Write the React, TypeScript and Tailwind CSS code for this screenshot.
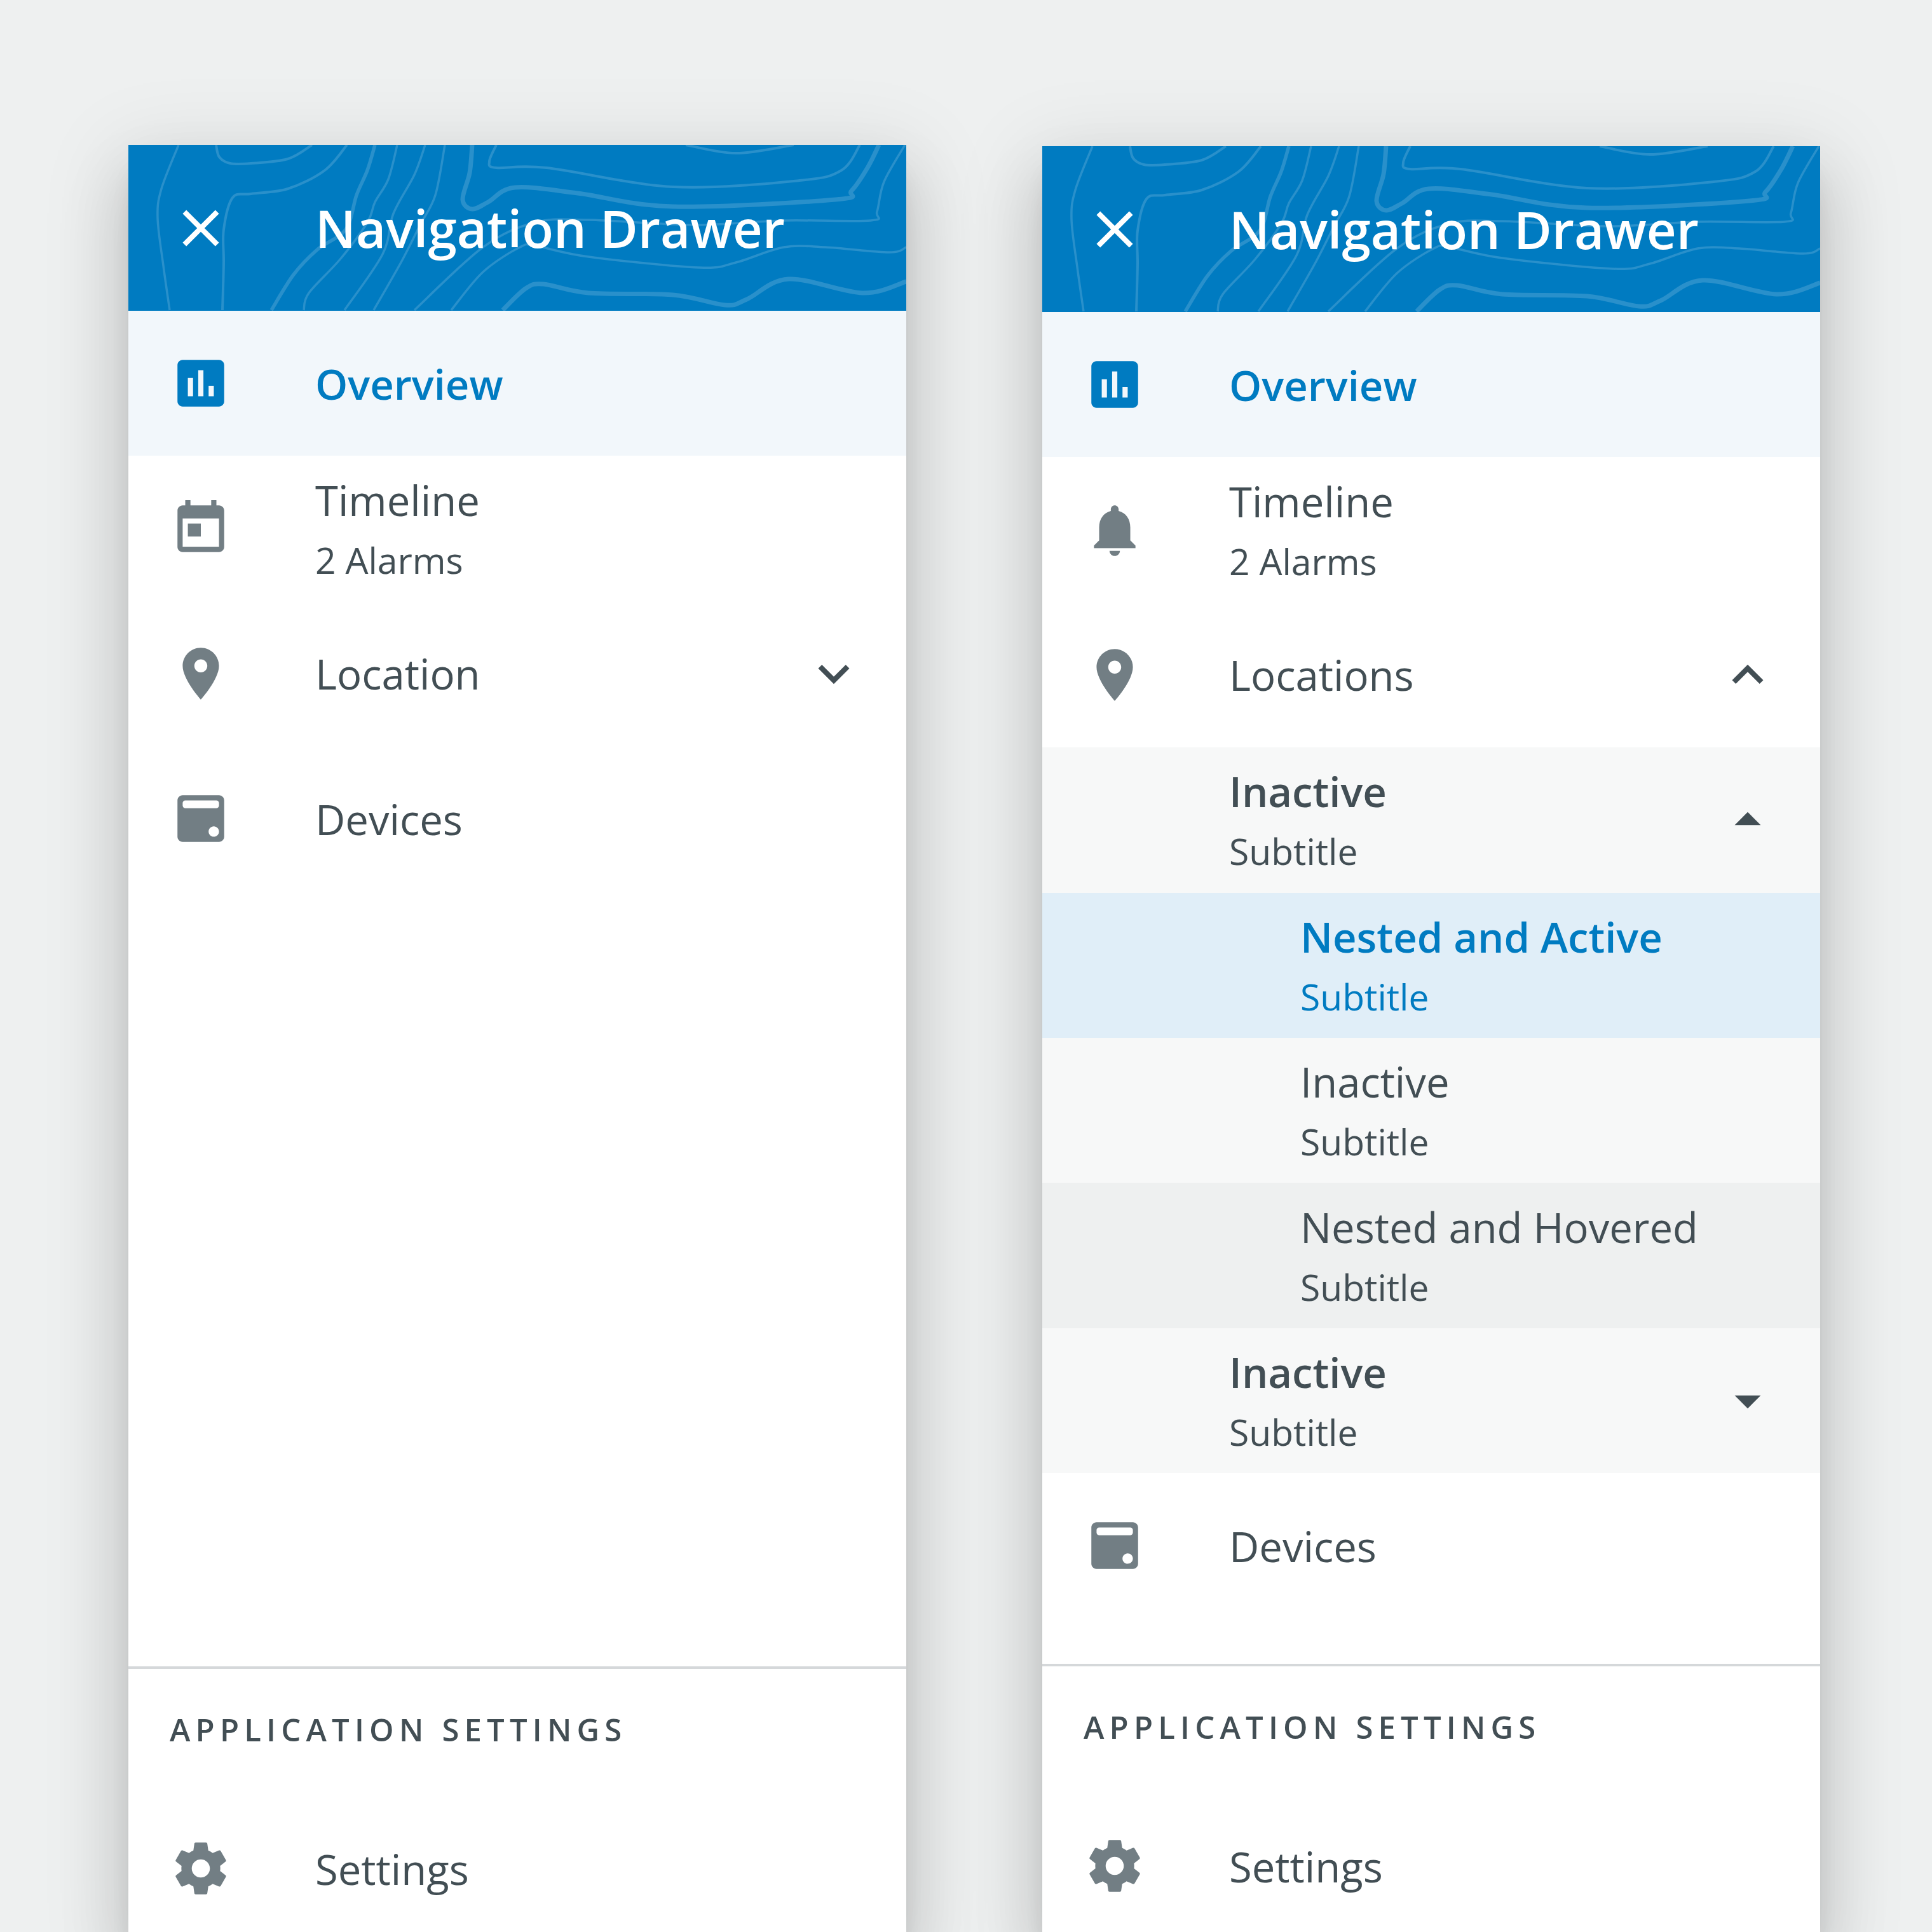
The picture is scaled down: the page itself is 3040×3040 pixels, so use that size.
import React from 'react';

const ICONS = {
  close: 'M19 6.41L17.59 5 12 10.59 6.41 5 5 6.41 10.59 12 5 17.59 6.41 19 12 13.41 17.59 19 19 17.59 13.41 12z',
  overview:
    'M19 3H5c-1.1 0-2 .9-2 2v14c0 1.1.9 2 2 2h14c1.1 0 2-.9 2-2V5c0-1.1-.9-2-2-2zM9 17H7v-7h2v7zm4 0h-2V7h2v10zm4 0h-2v-4h2v4z',
  today:
    'M19 3h-1V1h-2v2H8V1H6v2H5c-1.11 0-1.99.9-1.99 2L3 19c0 1.1.89 2 2 2h14c1.1 0 2-.9 2-2V5c0-1.1-.9-2-2-2zm0 16H5V8h14v11zM7 10h5v5H7z',
  bell: 'M12 22c1.1 0 2-.9 2-2h-4c0 1.1.9 2 2 2zm6-6v-5c0-3.07-1.63-5.64-4.5-6.32V4c0-.83-.67-1.5-1.5-1.5s-1.5.67-1.5 1.5v.68C7.64 5.36 6 7.92 6 11v5l-2 2v1h16v-1l-2-2z',
  place:
    'M12 2C8.13 2 5 5.13 5 9c0 5.25 7 13 7 13s7-7.75 7-13c0-3.87-3.13-7-7-7zm0 9.5c-1.38 0-2.5-1.12-2.5-2.5s1.12-2.5 2.5-2.5 2.5 1.12 2.5 2.5-1.12 2.5-2.5 2.5z',
  device:
    'M5 3h14c1.1 0 2 .9 2 2v14c0 1.1-.9 2-2 2H5c-1.1 0-2-.9-2-2V5c0-1.1.9-2 2-2zm1 2c-.55 0-1 .45-1 1v1c0 .55.45 1 1 1h12c.55 0 1-.45 1-1V6c0-.55-.45-1-1-1H6zm11 10c-1.1 0-2 .9-2 2s.9 2 2 2 2-.9 2-2-.9-2-2-2z',
  gear: 'M19.43 12.98c.04-.32.07-.64.07-.98s-.03-.66-.07-.98l2.11-1.65c.19-.15.24-.42.12-.64l-2-3.46c-.12-.22-.39-.3-.61-.22l-2.49 1c-.52-.4-1.08-.73-1.69-.98l-.38-2.65C14.46 2.18 14.25 2 14 2h-4c-.25 0-.46.18-.49.42l-.38 2.65c-.61.25-1.17.59-1.69.98l-2.49-1c-.23-.09-.49 0-.61.22l-2 3.46c-.13.22-.07.49.12.64l2.11 1.65c-.04.32-.07.65-.07.98s.03.66.07.98l-2.11 1.65c-.19.15-.24.42-.12.64l2 3.46c.12.22.39.3.61.22l2.49-1c.52.4 1.08.73 1.69.98l.38 2.65c.03.24.24.42.49.42h4c.25 0 .46-.18.49-.42l.38-2.65c.61-.25 1.17-.59 1.69-.98l2.49 1c.23.09.49 0 .61-.22l2-3.46c.12-.22.07-.49-.12-.64l-2.11-1.65zM12 15.5c-1.93 0-3.5-1.57-3.5-3.5s1.57-3.5 3.5-3.5 3.5 1.57 3.5 3.5-1.57 3.5-3.5 3.5z',
  chevronDown: 'M16.59 8.59L12 13.17 7.41 8.59 6 10l6 6 6-6z',
  chevronUp: 'M12 8l-6 6 1.41 1.41L12 10.83l4.59 4.58L18 14z',
  arrowUp: 'M7 14l5-5 5 5z',
  arrowDown: 'M7 10l5 5 5-5z',
};

type IconName = keyof typeof ICONS;

const Icon = ({ name, className }: { name: IconName; className: string }) => (
  <svg viewBox="0 0 24 24" fill="currentColor" fillRule="evenodd" className={`w-[98px] h-[98px] shrink-0 ${className}`}>
    <path d={ICONS[name]} />
  </svg>
);

// contour lines of the header, as points in header pixels
const CONTOURS: { width: number; points: number[][] }[] = [
  { width: 3.5, points: [[79, 0], [52, 69], [46, 115], [55, 190], [65, 260]] },
  { width: 4, points: [[138, 0], [143, 19], [160, 29], [193, 29], [251, 22], [289, 0]] },
  { width: 4, points: [[344, 0], [309, 40], [251, 69], [193, 77], [164, 83], [150, 133], [150, 186], [148, 260]] },
  { width: 5.5, points: [[388, 0], [376, 40], [359, 79], [342, 133], [297, 165], [260, 204], [225, 260]] },
  { width: 3.5, points: [[423, 0], [409, 54], [388, 90], [376, 122], [334, 179], [284, 233], [276, 260]] },
  { width: 3.5, points: [[467, 0], [450, 47], [417, 108], [400, 172], [340, 260]] },
  { width: 3.5, points: [[498, 0], [483, 79], [459, 126], [430, 183], [386, 260]] },
  { width: 3.5, points: [[1222, 0], [1189, 58], [1178, 105], [1168, 119], [1031, 119], [890, 126], [724, 118], [640, 122], [558, 161], [450, 260]] },
  { width: 7, points: [[541, 0], [537, 44], [526, 86], [541, 101], [566, 90], [608, 67], [707, 76], [857, 97], [1113, 86], [1138, 72], [1163, 36], [1181, 0]] },
  { width: 4, points: [[579, 0], [568, 26], [579, 36], [658, 36], [857, 66], [1056, 56], [1122, 40], [1151, 0]] },
  { width: 4, points: [[877, 0], [956, 13], [1047, 0]] },
  { width: 3.5, points: [[508, 260], [558, 200], [616, 161], [641, 159], [724, 176], [898, 193], [956, 185], [1031, 161], [1097, 161], [1197, 169], [1224, 161]] },
  { width: 7, points: [[589, 260], [625, 226], [653, 219], [724, 233], [857, 236], [939, 252], [973, 243], [1039, 211], [1155, 233], [1224, 215]] },
];

const smoothPath = (pts: number[][]) => {
  let d = `M${pts[0][0]} ${pts[0][1]}`;
  for (let i = 0; i < pts.length - 1; i++) {
    const p0 = pts[i - 1] || pts[i];
    const p1 = pts[i];
    const p2 = pts[i + 1];
    const p3 = pts[i + 2] || p2;
    const c1x = p1[0] + (p2[0] - p0[0]) / 6;
    const c1y = p1[1] + (p2[1] - p0[1]) / 6;
    const c2x = p2[0] - (p3[0] - p1[0]) / 6;
    const c2y = p2[1] - (p3[1] - p1[1]) / 6;
    d += ` C${c1x} ${c1y} ${c2x} ${c2y} ${p2[0]} ${p2[1]}`;
  }
  return d;
};

const Header = () => (
  <div className="relative h-[261px] shrink-0 bg-[#007bc1] flex items-center gap-[131px] px-[65px] text-white overflow-hidden">
    <svg viewBox="0 0 1224 261" fill="none" className="absolute inset-0 w-full h-full">
      {CONTOURS.map((line, i) => (
        <path key={i} d={smoothPath(line.points)} stroke="#ffffff" strokeOpacity={0.16} strokeWidth={line.width} />
      ))}
    </svg>
    <Icon name="close" className="relative" />
    <span className="relative text-[81.6px] leading-none font-semibold">Navigation Drawer</span>
  </div>
);

type RowProps = {
  icon?: IconName;
  title: string;
  subtitle?: string;
  trailing?: IconName;
  nested?: boolean;
  bg?: string;
  bold?: boolean;
  active?: boolean;
};

const Row = ({ icon, title, subtitle, trailing, nested, bg = '', bold, active }: RowProps) => (
  <div className={`h-[228.4px] shrink-0 flex items-center pl-[65px] pr-[65px] ${bg}`}>
    <div className={`shrink-0 ${nested ? 'w-[341px]' : 'w-[229px]'} h-[98px]`}>
      {icon && <Icon name={icon} className={active ? 'text-[#007bc1]' : 'text-[#727e84]'} />}
    </div>
    <div className={`flex-1 min-w-0 ${subtitle ? 'pt-[4px]' : ''} ${active ? 'text-[#007bc1]' : 'text-[#424e54]'}`}>
      <div className={`text-[65.2px] leading-[93px] ${subtitle ? 'mb-[2px]' : ''} ${bold || active ? 'font-semibold' : ''}`}>
        {title}
      </div>
      {subtitle && <div className="text-[57px] leading-[93px]">{subtitle}</div>}
    </div>
    {trailing && <Icon name={trailing} className="text-[#424e54]" />}
  </div>
);

const Footer = () => (
  <div className="mt-auto shrink-0 border-t-4 border-[#d5d8da]">
    <div className="h-[192px] mb-[8px] flex items-center pl-[65px] text-[49px] font-semibold tracking-[8.2px] text-[#424e54]">
      APPLICATION SETTINGS
    </div>
    <Row icon="gear" title="Settings" />
  </div>
);

const cardClass =
  'relative w-[1224px] flex flex-col bg-white shrink-0 shadow-[0_65px_98px_8px_rgba(0,0,0,0.12),0_24px_122px_20px_rgba(0,0,0,0.09),0_33px_41px_-20px_rgba(0,0,0,0.2)]';

export default function App() {
  return (
    <div className="w-[3040px] h-[3040px] overflow-hidden bg-[#eef0f0] flex gap-[214px] pl-[202px] font-['Open_Sans',sans-serif]">
      <div className={`${cardClass} mt-[228px] h-[2826.4px]`}>
        <Header />
        <Row icon="overview" title="Overview" bg="bg-[#f2f7fb]" active />
        <Row icon="today" title="Timeline" subtitle="2 Alarms" />
        <Row icon="place" title="Location" trailing="chevronDown" />
        <Row icon="device" title="Devices" />
        <Footer />
      </div>

      <div className={`${cardClass} mt-[230px] h-[2820.4px]`}>
        <Header />
        <Row icon="overview" title="Overview" bg="bg-[#f2f7fb]" active />
        <Row icon="bell" title="Timeline" subtitle="2 Alarms" />
        <Row icon="place" title="Locations" trailing="chevronUp" />
        <Row title="Inactive" subtitle="Subtitle" trailing="arrowUp" bg="bg-[#f7f8f8]" bold />
        <Row title="Nested and Active" subtitle="Subtitle" bg="bg-[#e0eef8]" nested active />
        <Row title="Inactive" subtitle="Subtitle" bg="bg-[#f7f8f8]" nested />
        <Row title="Nested and Hovered" subtitle="Subtitle" bg="bg-[#eef0f0]" nested />
        <Row title="Inactive" subtitle="Subtitle" trailing="arrowDown" bg="bg-[#f7f8f8]" bold />
        <Row icon="device" title="Devices" />
        <Footer />
      </div>
    </div>
  );
}
